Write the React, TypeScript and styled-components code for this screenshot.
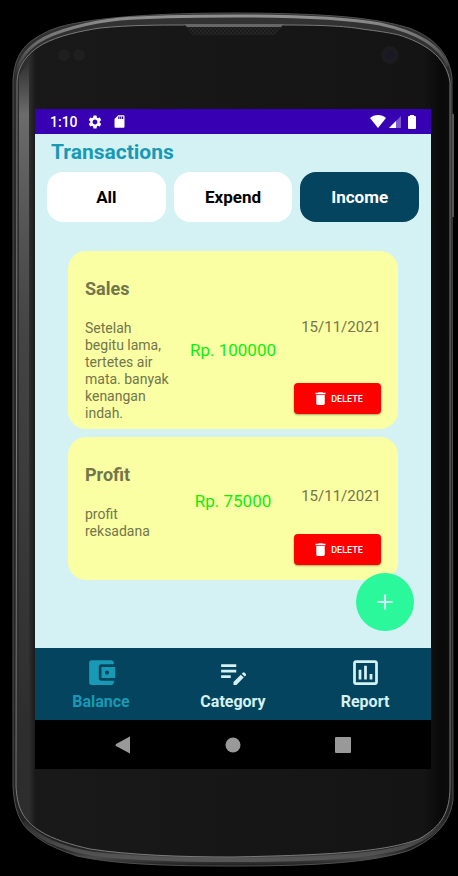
import React, { useState } from 'react';
import styled, { createGlobalStyle } from 'styled-components';
import {
  MdAccountBalanceWallet,
  MdAdd,
  MdDelete,
  MdEditNote,
  MdOutlineAssessment,
  MdSdCard,
  MdSettings,
} from 'react-icons/md';

const colors = {
  navy: '#05445e',
  teal: '#189ab4',
  ice: '#d4f1f4',
  card: '#faffa3',
  olive: '#73754b',
  status: '#3700b3',
};

const GlobalStyle = createGlobalStyle`
  *, *::before, *::after { box-sizing: border-box; }
  body { margin: 0; background: #000; font-family: Roboto, "Liberation Sans", sans-serif; }
  button { font: inherit; border: 0; padding: 0; cursor: pointer; }
  h1, h2, p { margin: 0; }
`;

const Device = styled.div`
  position: relative;
  display: flex;
  min-height: 100vh;
  padding: 109px 27px 107px 35px;
`;

const Casing = styled.svg`
  position: absolute;
  inset: 0;
  width: 100%;
  height: 100%;
`;

const Screen = styled.div`
  position: relative;
  flex: 1;
  min-width: 0;
  display: flex;
  flex-direction: column;
  background: ${colors.ice};
`;

const StatusBar = styled.header`
  display: flex;
  align-items: center;
  justify-content: space-between;
  height: 25px;
  padding: 0 12px 0 15px;
  background: ${colors.status};
  color: #fff;
  font-size: 14px;
  font-weight: 500;
`;

const StatusGroup = styled.div<{ $gap: number }>`
  display: flex;
  align-items: center;
  gap: ${(p) => p.$gap}px;
`;

const Content = styled.main`
  position: relative;
  flex: 1;
  padding: 6px 12px 68px;
`;

const Title = styled.h1`
  padding-left: 4px;
  font-size: 21px;
  line-height: 24px;
  color: ${colors.teal};
`;

const Filters = styled.div`
  display: flex;
  gap: 8px;
  margin-top: 8px;
`;

const FilterButton = styled.button<{ $active: boolean }>`
  flex: 1;
  height: 50px;
  border-radius: 16px;
  font-size: 17px;
  font-weight: 700;
  background: ${(p) => (p.$active ? colors.navy : '#fff')};
  color: ${(p) => (p.$active ? '#fff' : '#000')};
`;

const List = styled.ul`
  display: flex;
  flex-direction: column;
  gap: 8px;
  margin: 29px 21px 0;
  padding: 0;
  list-style: none;
`;

const Card = styled.li`
  display: grid;
  grid-template-columns: 87px 1fr 87px;
  gap: 14px;
  min-height: 143px;
  padding: 0 17px;
  border-radius: 18px;
  background: ${colors.card};
  color: ${colors.olive};
`;

const Details = styled.div`
  padding: 26px 0 7px;
`;

const Name = styled.h2`
  font-size: 18px;
  line-height: 24px;
`;

const Note = styled.p`
  margin-top: 19px;
  font-size: 14px;
  line-height: 17px;
`;

const Amount = styled.p`
  align-self: end;
  padding-bottom: 69px;
  text-align: center;
  white-space: nowrap;
  font-size: 17px;
  line-height: 20px;
  color: #0af00a;
`;

const Side = styled.div`
  display: flex;
  flex-direction: column;
  padding: 20px 0 15px;
`;

const DateText = styled.time`
  flex: 1;
  display: flex;
  align-items: center;
  justify-content: flex-end;
  font-size: 15px;
`;

const DeleteButton = styled.button`
  display: flex;
  align-items: center;
  justify-content: center;
  gap: 2px;
  height: 31px;
  border-radius: 4px;
  background: #f00;
  color: #fff;
  font-size: 9px;
  font-weight: 500;
  box-shadow: 0 1px 2px rgba(0, 0, 0, 0.35);
`;

const AddButton = styled.button`
  position: absolute;
  right: 17px;
  bottom: 17px;
  display: flex;
  align-items: center;
  justify-content: center;
  width: 58px;
  height: 58px;
  border-radius: 50%;
  background: #2bf79b;
  color: ${colors.ice};
`;

const TabBar = styled.nav`
  display: flex;
  height: 72px;
  background: ${colors.navy};
`;

const Tab = styled.button<{ $active: boolean }>`
  flex: 1;
  display: flex;
  flex-direction: column;
  align-items: center;
  padding-top: 8px;
  background: none;
  color: ${(p) => (p.$active ? colors.teal : colors.ice)};
  font-size: 16px;
  font-weight: 700;
  line-height: 25px;
`;

const SystemBar = styled.nav`
  display: flex;
  justify-content: center;
  height: 49px;
  background: #000;
`;

const SystemButton = styled.button`
  display: flex;
  align-items: center;
  justify-content: center;
  width: 110px;
  background: none;
  color: #999;
`;

const BODY =
  'M13 80 C14 62 20 50 30 42 C46 30 60 26 77 23 C113 16 173 13 233 13 C290 13 340 15 372 20 C392 23 402 26 409 28 C430 36 449 50 452 78 L453 800 C450 822 436 838 410 850 C376 862 320 866 233 866 C150 866 110 863 77 856 C60 850 44 844 33 834 C19 824 14 808 13 786 Z';
const TOP_INNER =
  'M17 82 C18 66 26 54 43 44 C58 36 80 31 100 28 C130 25 160 25 183 25 L284 25 C320 25 345 26 362 29 C385 32 390 33 399 35 C424 43 446 56 450 82';
const BOTTOM_INNER =
  'L450 786 C450 812 442 826 419 839 C385 852 329 855 233 857 C180 857 130 855 90 849 C72 845 52 839 40 831 C22 820 17 806 16 786';

function PhoneCasing() {
  return (
    <Casing viewBox="0 0 458 876" preserveAspectRatio="none" aria-hidden="true">
      <defs>
        <linearGradient id="rim" x1="0" y1="0" x2="0" y2="1">
          <stop offset="0" stopColor="#333" />
          <stop offset="0.1" stopColor="#2a2a2a" />
          <stop offset="0.98" stopColor="#222" />
          <stop offset="0.99" stopColor="#4a4a4a" />
          <stop offset="1" stopColor="#1c1c1c" />
        </linearGradient>
        <linearGradient id="glass" x1="0" y1="0" x2="1" y2="0">
          <stop offset="0" stopColor="#2c2c2c" />
          <stop offset="0.03" stopColor="#2e2e2e" />
          <stop offset="0.045" stopColor="#191919" />
          <stop offset="0.94" stopColor="#141414" />
          <stop offset="0.98" stopColor="#090909" />
          <stop offset="1" stopColor="#0c0c0c" />
        </linearGradient>
        <linearGradient id="sheen" x1="0" y1="0" x2="0" y2="1">
          <stop offset="0" stopColor="#aaa" stopOpacity="0" />
          <stop offset="0.08" stopColor="#aaa" stopOpacity="0.5" />
          <stop offset="0.4" stopColor="#888" stopOpacity="0.25" />
          <stop offset="1" stopColor="#888" stopOpacity="0" />
        </linearGradient>
        <linearGradient id="topShine" gradientUnits="userSpaceOnUse" x1="0" y1="16" x2="0" y2="76">
          <stop offset="0" stopColor="#909090" />
          <stop offset="0.4" stopColor="#707070" />
          <stop offset="1" stopColor="#707070" stopOpacity="0" />
        </linearGradient>
        <linearGradient id="bottomShine" gradientUnits="userSpaceOnUse" x1="0" y1="815" x2="0" y2="860">
          <stop offset="0" stopColor="#4c4c4c" stopOpacity="0" />
          <stop offset="0.7" stopColor="#4c4c4c" />
          <stop offset="1" stopColor="#565656" />
        </linearGradient>
        <pattern id="mesh" width="4" height="4" patternUnits="userSpaceOnUse">
          <rect width="4" height="4" fill="#262626" />
          <circle cx="1" cy="1" r="1" fill="#161616" />
          <circle cx="3" cy="3" r="1" fill="#161616" />
        </pattern>
      </defs>
      <path d={BODY} fill="url(#rim)" stroke="#505050" />
      <path
        d="M16 76 C18 62 26 50 38 42 C54 31 90 22 120 19 C160 16 190 16 233 16 C290 16 345 18 380 24 C412 31 440 44 448 66"
        fill="none"
        stroke="url(#topShine)"
        strokeWidth="3"
      />
      <path
        d="M24 822 C38 840 65 849 94 854 C140 859 180 860 233 860 C310 860 370 857 404 847 C424 840 440 829 446 816"
        fill="none"
        stroke="url(#bottomShine)"
        strokeWidth="4"
      />
      <path d={`${TOP_INNER} ${BOTTOM_INNER} Z`} fill="url(#glass)" stroke="#7a7a7a" />
      <path d="M19 76 L29 60 L29 700 L19 740 Z" fill="url(#sheen)" />
      <path d="M184 25 L193 35 H274 L284 25 Z" fill="url(#mesh)" />
      <path d="M184 24 H284 L281 27 H187 Z" fill="#666" />
      <circle cx="64" cy="55" r="6" fill="#1f1f1f" />
      <circle cx="79" cy="55" r="6" fill="#1f1f1f" />
      <circle cx="390" cy="55" r="9" fill="#1c1c20" />
      <circle cx="390" cy="55" r="4" fill="#181826" />
      <path d="M453 114 V217" stroke="#555" strokeWidth="2" />
    </Casing>
  );
}

const filters = ['All', 'Expend', 'Income'];

const transactions = [
  {
    name: 'Sales',
    note: 'Setelah begitu lama, tertetes air mata. banyak kenangan indah.',
    amount: 'Rp. 100000',
    date: '15/11/2021',
    iso: '2021-11-15',
  },
  {
    name: 'Profit',
    note: 'profit reksadana',
    amount: 'Rp. 75000',
    date: '15/11/2021',
    iso: '2021-11-15',
  },
];

const tabs = [
  { label: 'Balance', Icon: MdAccountBalanceWallet },
  { label: 'Category', Icon: MdEditNote },
  { label: 'Report', Icon: MdOutlineAssessment },
];

export default function App() {
  const [filter, setFilter] = useState('Income');
  const [tab, setTab] = useState('Balance');

  return (
    <Device>
      <GlobalStyle />
      <PhoneCasing />
      <Screen>
        <StatusBar>
          <StatusGroup $gap={9}>
            <span>1:10</span>
            <MdSettings size={16} />
            <MdSdCard size={15} />
          </StatusGroup>
          <StatusGroup $gap={3}>
            <svg width="16" height="13" viewBox="0 0 16 13" fill="currentColor" aria-hidden="true">
              <path d="M0 3 C4 -1 12 -1 16 3 L8 13 Z" />
            </svg>
            <svg width="12" height="12" viewBox="0 0 12 12" fill="currentColor" aria-hidden="true">
              <path d="M12 0 V12 H0 Z" opacity="0.35" />
              <path d="M7 5 V12 H0 Z" />
            </svg>
            <svg width="15" height="14" viewBox="0 0 15 14" fill="currentColor" aria-hidden="true">
              <path d="M6 0 H10 V1 H11 Q12 1 12 2 V13 Q12 14 11 14 H5 Q4 14 4 13 V2 Q4 1 5 1 H6 Z" />
            </svg>
          </StatusGroup>
        </StatusBar>

        <Content>
          <Title>Transactions</Title>
          <Filters>
            {filters.map((f) => (
              <FilterButton key={f} type="button" $active={f === filter} aria-pressed={f === filter} onClick={() => setFilter(f)}>
                {f}
              </FilterButton>
            ))}
          </Filters>
          <List>
            {transactions.map((t) => (
              <Card key={t.name}>
                <Details>
                  <Name>{t.name}</Name>
                  <Note>{t.note}</Note>
                </Details>
                <Amount>{t.amount}</Amount>
                <Side>
                  <DateText dateTime={t.iso}>{t.date}</DateText>
                  <DeleteButton type="button">
                    <MdDelete size={17} />
                    DELETE
                  </DeleteButton>
                </Side>
              </Card>
            ))}
          </List>
          <AddButton type="button" aria-label="Add transaction">
            <MdAdd size={26} />
          </AddButton>
        </Content>

        <TabBar>
          {tabs.map(({ label, Icon }) => (
            <Tab key={label} type="button" $active={label === tab} onClick={() => setTab(label)}>
              <Icon size={33} />
              {label}
            </Tab>
          ))}
        </TabBar>

        <SystemBar>
          <SystemButton type="button" aria-label="Back">
            <svg width="16" height="18" viewBox="0 0 16 18" fill="currentColor">
              <path d="M15 1 V17 Q15 18 14 17 L1 10 Q0 9 1 8 L14 1 Q15 0 15 1 Z" />
            </svg>
          </SystemButton>
          <SystemButton type="button" aria-label="Home">
            <svg width="16" height="16" viewBox="0 0 16 16" fill="currentColor">
              <circle cx="8" cy="8" r="7.5" />
            </svg>
          </SystemButton>
          <SystemButton type="button" aria-label="Recent apps">
            <svg width="16" height="16" viewBox="0 0 16 16" fill="currentColor">
              <rect width="16" height="16" rx="1" />
            </svg>
          </SystemButton>
        </SystemBar>
      </Screen>
    </Device>
  );
}
